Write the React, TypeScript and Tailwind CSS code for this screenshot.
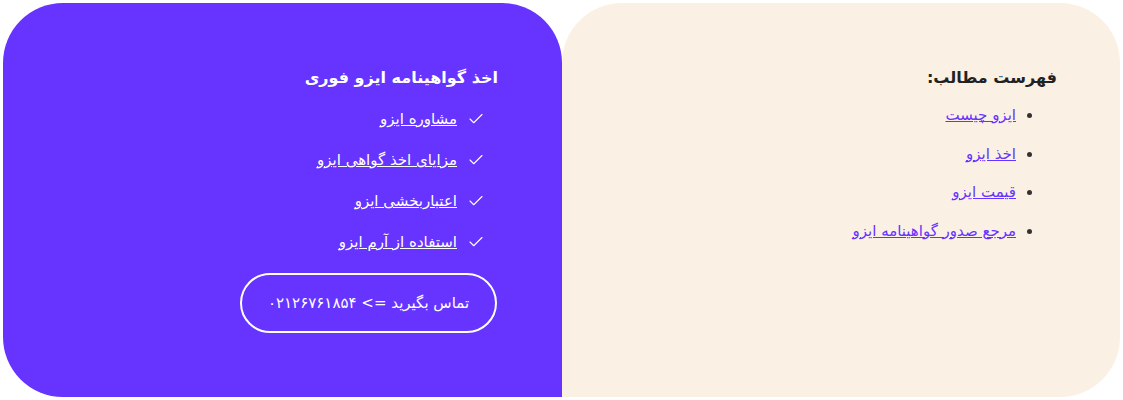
import { Check } from 'lucide-react';

const perks = ['مشاوره ایزو', 'مزایای اخذ گواهی ایزو', 'اعتباربخشی ایزو', 'استفاده از آرم ایزو'];
const contents = ['ایزو چیست', 'اخذ ایزو', 'قیمت ایزو', 'مرجع صدور گواهینامه ایزو'];

export default function App() {
  return (
    <div
      dir="rtl"
      className="p-[3px] bg-white"
      style={{ fontFamily: '"DejaVu Sans", "Noto Sans", sans-serif' }}
    >
      <div className="flex h-[394px]">
        {/* فهرست مطالب */}
        <div className="flex-1 bg-[#faf1e4] rounded-tr-[60px] rounded-br-[60px] rounded-tl-[60px] pt-[62px] pr-[63px]">
          <h3 className="text-[16px] font-bold text-[#222] leading-[26px]">فهرست مطالب:</h3>
          <ul className="list-disc pr-[41px] mt-[12px] flex flex-col gap-[14px] text-[15px] leading-[24.5px] text-[#333]">
            {contents.map((c) => (
              <li key={c}>
                <a href="#" className="text-[#6633ff] underline">{c}</a>
              </li>
            ))}
          </ul>
        </div>

        {/* باکس بنفش */}
        <div className="flex-1 bg-[#6633ff] rounded-tr-[60px] rounded-tl-[60px] rounded-bl-[60px] pt-[62px] pr-[64px] text-white">
          <h3 className="text-[16px] font-bold leading-[26px]">اخذ گواهینامه ایزو فوری</h3>
          <ul className="mt-[16px] pr-[13px] flex flex-col gap-[17px] text-[15px] leading-[24px]">
            {perks.map((p) => (
              <li key={p} className="flex items-center gap-[10px]">
                <Check size={18} strokeWidth={1.5} />
                <a href="#" className="underline">{p}</a>
              </li>
            ))}
          </ul>
          <button className="mt-[19px] mr-[1px] w-[257px] h-[60px] rounded-full border-2 border-white text-[15px] text-white">
            تماس بگیرید <bdo dir="ltr">&lt;=</bdo> ۰۲۱۲۶۷۶۱۸۵۴
          </button>
        </div>
      </div>
    </div>
  );
}
